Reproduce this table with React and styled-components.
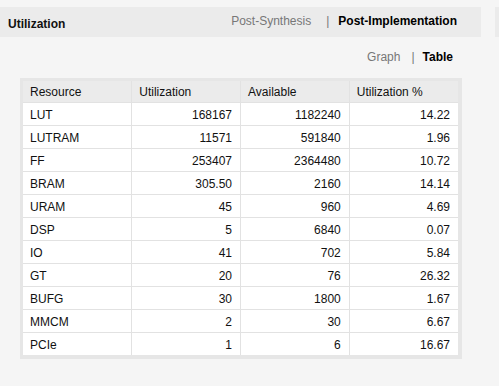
import React from 'react';
import styled, { createGlobalStyle } from 'styled-components';

const GlobalStyle = createGlobalStyle`
    body {
        margin: 0;
        background: #f5f5f5;
        font-family: "Liberation Sans", Arial, sans-serif;
        font-size: 12px;
        color: #111;
    }
`

const Page = styled.div`
    display: flex;
    gap: 14px;
    padding-top: 7px;
    width: 520px;
    overflow: hidden;
`

const Panel = styled.div`
    width: 481px;
    flex: none;
`

const SidePanel = styled.div`
    width: 40px;
    height: 30px;
    flex: none;
    background: #ebebeb;
`

const HeaderBar = styled.div`
    display: flex;
    justify-content: space-between;
    align-items: center;
    height: 30px;
    background: #ebebeb;
    padding: 0 24px 0 8px;
`

const Title = styled.div`
    font-weight: bold;
    padding-top: 3px;
`

const Tabs = styled.div`
    display: flex;
    align-items: center;
    margin-top: ${p => p.$top || 0}px;
`

const Tab = styled.span`
    color: ${p => (p.$active ? '#000' : '#777')};
    font-weight: ${p => (p.$active ? 'bold' : 'normal')};
`

const Sep = styled.span`
    color: #777;
    margin: 0 ${p => p.$right}px 0 ${p => p.$left}px;
`

const SubBar = styled.div`
    display: flex;
    justify-content: flex-end;
    padding: 12px 28px 0 0;
    height: 28px;
    box-sizing: border-box;
    align-items: center;
`

const TableFrame = styled.div`
    margin: 13px 0 0 20px;
    width: 435px;
    padding: 3px 4px 4px 3px;
    background: #e6e6e6;
`

const Table = styled.table`
    width: 435px;
    border-collapse: collapse;
    table-layout: fixed;
`

const HeadCell = styled.th`
    height: 20px;
    padding: 1px 7px 0;
    text-align: left;
    font-weight: normal;
    background: #ebebeb;
    border-left: 1px solid #e2e2e2;
    &:first-child { border-left: none; }
`

const Cell = styled.td`
    height: 21px;
    padding: 1px ${p => (p.$num ? 8 : 7)}px 0;
    text-align: ${p => (p.$num ? 'right' : 'left')};
    background: #fff;
    border-top: 1px solid #e2e2e2;
    border-left: 1px solid #e2e2e2;
    &:first-child { border-left: none; }
`

const rows = [
    ['LUT', '168167', '1182240', '14.22'],
    ['LUTRAM', '11571', '591840', '1.96'],
    ['FF', '253407', '2364480', '10.72'],
    ['BRAM', '305.50', '2160', '14.14'],
    ['URAM', '45', '960', '4.69'],
    ['DSP', '5', '6840', '0.07'],
    ['IO', '41', '702', '5.84'],
    ['GT', '20', '76', '26.32'],
    ['BUFG', '30', '1800', '1.67'],
    ['MMCM', '2', '30', '6.67'],
    ['PCIe', '1', '6', '16.67'],
]

const App = () => {
    return (
        <Page>
            <GlobalStyle />
            <Panel>
                <HeaderBar>
                    <Title>Utilization</Title>
                    <Tabs $top={-2}>
                        <Tab>Post-Synthesis</Tab>
                        <Sep $left={15} $right={9}>|</Sep>
                        <Tab $active>Post-Implementation</Tab>
                    </Tabs>
                </HeaderBar>
                <SubBar>
                    <Tabs>
                        <Tab>Graph</Tab>
                        <Sep $left={11} $right={8}>|</Sep>
                        <Tab $active>Table</Tab>
                    </Tabs>
                </SubBar>
                <TableFrame>
                    <Table>
                        <thead>
                            <tr>
                                <HeadCell>Resource</HeadCell>
                                <HeadCell>Utilization</HeadCell>
                                <HeadCell>Available</HeadCell>
                                <HeadCell>Utilization %</HeadCell>
                            </tr>
                        </thead>
                        <tbody>
                            {rows.map(row => (
                                <tr key={row[0]}>
                                    {row.map((value, i) => (
                                        <Cell key={i} $num={i > 0}>{value}</Cell>
                                    ))}
                                </tr>
                            ))}
                        </tbody>
                    </Table>
                </TableFrame>
            </Panel>
            <SidePanel />
        </Page>
    )
}

export default App;
